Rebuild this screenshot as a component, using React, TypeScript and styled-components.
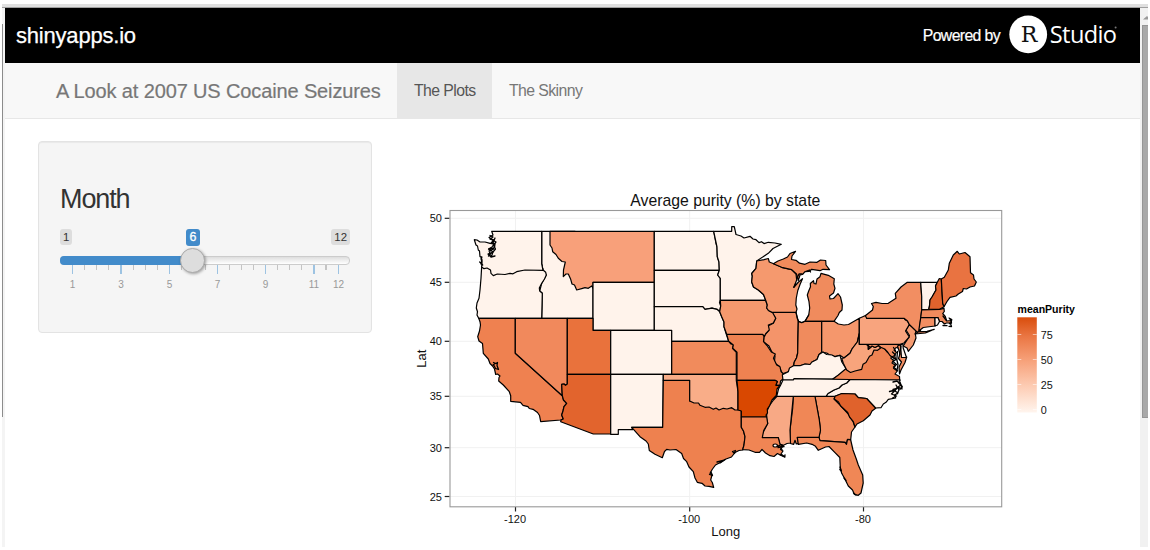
import React from "react";
import styled, { createGlobalStyle } from "styled-components";

const GlobalStyle = createGlobalStyle`
  html, body { margin: 0; padding: 0; background: #fff; }
  body { font-family: "Liberation Sans", Arial, sans-serif; color: #333; overflow: hidden; }
  * { box-sizing: border-box; }
`;

const Window = styled.div`
  width: 1150px;
  height: 550px;
  padding: 4px 2px 3px 2px;
  display: flex;
  flex-direction: column;
`;

const WindowTop = styled.div`
  height: 4px;
  flex: none;
  background: #e0e0e0;
  border-bottom: 1px solid #a0a0a0;
`;

const WindowBody = styled.div`
  flex: 1;
  display: flex;
  min-height: 0;
`;

const LeftEdge = styled.div`
  width: 3px;
  padding-top: 16px;
  background: #f4f4f4;
`;

const EdgeLine = styled.div`
  width: 1px;
  height: 393px;
  background: #8c8c8c;
`;

const Page = styled.div`
  width: 1135px;
  display: flex;
  flex-direction: column;
  background: #fff;
`;

const Scrollbar = styled.div`
  width: 8px;
  padding-left: 2px;
  background: #f1f1f1;
`;

const ScrollArrow = styled.div`
  height: 17px;
  padding: 8px 0 0 1px;
  overflow: hidden;
  svg { display: block; }
`;

const ScrollThumb = styled.div`
  height: 393px;
  background: #a8a8a8;
  border: 1px solid #959595;
  border-right: 0;
`;

const TopBar = styled.header`
  height: 55px;
  flex: none;
  padding: 0 22px 0 11px;
  display: flex;
  align-items: center;
  justify-content: space-between;
  background: #000;
  color: #fff;
`;

const Brand = styled.div`
  font-size: 22px;
  letter-spacing: -0.2px;
  line-height: 55px;
  -webkit-text-stroke: 0.25px #fff;
`;

const Powered = styled.div`
  display: flex;
  align-items: center;
  gap: 8px;
  font-size: 15.8px;
  letter-spacing: -0.62px;
  -webkit-text-stroke: 0.2px #fff;
  svg { display: block; }
`;

const NavBar = styled.nav`
  height: 56px;
  flex: none;
  display: flex;
  padding-left: 51px;
  line-height: 55px;
  background: #f8f8f8;
  border-bottom: 1px solid #e7e7e7;
  color: #777;
`;

const NavTitle = styled.div`
  width: 341px;
  padding-top: 1px;
  font-size: 20px;
  letter-spacing: -0.13px;
  white-space: nowrap;
  -webkit-text-stroke: 0.2px #777;
`;

const Tab = styled.div<{ $active?: boolean }>`
  width: 95px;
  padding-left: 17px;
  font-size: 15.8px;
  letter-spacing: -0.58px;
  white-space: nowrap;
  color: ${(p) => (p.$active ? "#555" : "#777")};
  background: ${(p) => (p.$active ? "#e7e7e7" : "transparent")};
`;

const Content = styled.main`
  display: flex;
  align-items: flex-start;
  padding: 22px 0 0 33px;
`;

const Well = styled.section`
  width: 334px;
  height: 192px;
  flex: none;
  padding: 42px 21px 0;
  background: #f5f5f5;
  border: 1px solid #e3e3e3;
  border-radius: 4px;
  box-shadow: inset 0 1px 1px rgba(0, 0, 0, 0.05);
`;

const Heading = styled.h3`
  margin: 0;
  height: 45px;
  font-size: 27px;
  line-height: 30px;
  letter-spacing: -1.1px;
  font-weight: 400;
`;

const Badges = styled.div`
  height: 27px;
  display: grid;
  grid-template-columns: 126px 1fr auto;
  align-items: start;
  justify-items: start;
`;

const Badge = styled.span<{ $current?: boolean }>`
  height: ${(p) => (p.$current ? 17 : 16)}px;
  padding: 0 ${(p) => (p.$current ? 3.5 : 3)}px;
  border-radius: 3px;
  font-size: ${(p) => (p.$current ? 12.4 : 11.4)}px;
  line-height: ${(p) => (p.$current ? 17 : 16)}px;
  color: ${(p) => (p.$current ? "#fff" : "#333")};
  background: ${(p) => (p.$current ? "#428bca" : "#ddd")};
  -webkit-text-stroke: ${(p) => (p.$current ? "0.3px #fff" : "0")};
`;

const Track = styled.div`
  position: relative;
  height: 9px;
  border: 1px solid #ccc;
  border-radius: 4px;
  background: linear-gradient(#dedede, #fff);
`;

const Fill = styled.div`
  width: 132px;
  height: 9px;
  margin: -1px 0 0 -1px;
  border-radius: 4px 0 0 4px;
  background: #428bca;
`;

const Handle = styled.div`
  position: absolute;
  left: 119px;
  top: -9px;
  width: 25px;
  height: 25px;
  border-radius: 50%;
  border: 1px solid #aaa;
  background: #ddd;
  box-shadow: 1px 1px 3px rgba(0, 0, 0, 0.35);
`;

const Ticks = styled.svg`
  display: block;
  font-size: 10px;
  fill: #999;
`;

const Plot = styled.svg`
  display: block;
  margin: 49px 0 0 33px;
  font-family: "Liberation Sans", Arial, sans-serif;
`;

const majorTicks = [
  { x: 12, w: 1, label: "1" },
  { x: 60, w: 2, label: "3" },
  { x: 109, w: 1, label: "5" },
  { x: 157, w: 1, label: "7" },
  { x: 205, w: 1, label: "9" },
  { x: 253, w: 2, label: "11" },
  { x: 278, w: 1, label: "12" },
];
const minorTicks = [24, 36, 48, 73, 85, 97, 121, 145, 169, 181, 193, 217, 229, 241, 265];

const NONE = "#fff3eb";

// Painted in order: a later state covers the hidden edges of an earlier one.
const states: { id: string; fill: string; d: string }[] = [
  { id: "ID", fill: NONE, d: "M541.7 231.3H575L593 280V318.3H541.7L542.3 293.3 539.7 291 541.7 283.3 546.3 275 543 270 541.7 264Z" },
  { id: "OR", fill: NONE, d: "M481.7 266L500 262 541 262 543 270 545.7 272.3 546.3 275 544.5 279 541.7 283.3 539.3 288 539.7 291 542.3 293.3 541.7 318.3H478.7L477 315 477.5 311.7 476.3 308 477 303 479 298.3 480 290 481 278.3Z" },
  { id: "WA", fill: NONE, d: "M491.7 231.3H541.7V264L543 270.3 525 270 516.7 271.7 513 273.8 510 273.3 505 274.5 497.3 274 493.3 275.6 491 273.3 490.5 270 487 268 484 268.7 481.7 267 482 262 481 259 482 257 480 256.7 479.5 251 478.3 250 477.5 246 476 245 474.3 239.7 477 240 480 242 485 242 490 243.3 494 244 492 247 488.5 249 490 251 489 255 491.5 256.5 493 252 495.5 249 493.5 245 496 242 492.5 240 489 237.5 493 235Z" },
  { id: "MT", fill: "#f8a07a", d: "M550 231.3H654.3V282.3H593V288.3L591.7 286 588.3 288.3 585 287.6 581.7 288.6 576.7 290 574.5 285 572 284 570.7 279.3 568.3 274 566 274 563.3 276.6 563.5 270 565.3 262 562 261.5 558.3 258.3 556 254.5 552.7 251.7 552 248 550 245Z" },
  { id: "WY", fill: NONE, d: "M593 282.3H654.3V330.3H593Z" },
  { id: "CA", fill: "#ef8150", d: "M478.7 318.3H515.3V353.3L562.3 395.7 563.5 400 566.7 403.3 564 406.7 563 411 561.7 415 563.3 419 560.7 420 540.7 421.7 539.5 415.5 537.5 412.5 533 409.3 529.3 408.5 528 406.7 523 405.3 520.5 402.3 510.7 401.3V395.7L509.3 391.7 503.3 385 498.7 381 499 377.5 500 376 497.5 374 495.7 374.5 494.5 369 492.5 366 490 363.5 488.3 359 483.3 353.3 482.5 343.5 479 341 477.7 336.7 479.5 331 480.5 325 480 321.7Z" },
  { id: "NV", fill: "#f1895c", d: "M515.3 318.3H567.3V384.3L565.5 385.3 564 384 561.7 384.3 562.3 395.7 515.3 353.3Z" },
  { id: "UT", fill: "#e9723c", d: "M567.3 318.3H593V330.3H610.7V374.3H567.3Z" },
  { id: "AZ", fill: "#e2642d", d: "M567.3 374.3H610.7V434H593.3L560.7 421.7 561 420 563.3 419 561.7 415 563 411 564 406.7 566.7 403.3 563.5 400 562.3 395.7 561.7 384.3 564 384 565.5 385.3 567.3 384Z" },
  { id: "CO", fill: NONE, d: "M610.7 330.3H671.7V374.3H610.7Z" },
  { id: "NM", fill: NONE, d: "M610.7 374.3H663.3L662.7 427.3H631.7L632.7 429.7H618.3V434.3H610.7Z" },
  { id: "ND", fill: NONE, d: "M654.3 231.3H713.7L715 238 716 243.3 717 247 717.3 256.7 719 262 719.3 270.3H654.3Z" },
  { id: "SD", fill: NONE, d: "M654.3 270.3H719.3L717.7 275 720.3 278.3V300.3L719.5 302.5 720.7 306 719.7 311.7 717 309.3 712 308.2 705 309.3 702.7 306.7H654.3Z" },
  { id: "NE", fill: NONE, d: "M654.3 306.7H702.7L705 309.3 712 308.2 717 309.3 719.7 311.7 721.7 316.7 724 322 724 326.7 726 333.3 728.7 341.3H671.7V330.3H654.3Z" },
  { id: "KS", fill: "#f18b5c", d: "M671.7 341.3H728.7L731 344 733.5 344.5 732.5 348.3 736.3 352.3V374.3H671.7Z" },
  { id: "MN", fill: NONE, d: "M713.7 231.3H731.7V226.7H734.3L736 234.5 741 236 744 238 750 236.3 753 239 756 239.7 759 242.6 761.5 241.7 764 243.6 768.3 242.3 775 243 781.3 244.3 773 248.5 768.3 253.3 756.7 261 756 268.3 751.7 273.5 752.3 276 751.7 282 753.5 287 758.3 290 763.5 294.5 765.7 300.3H720.3V278.3L717.7 275 719.3 270.3 719 262 717.3 256.7 717 247 715.5 240Z" },
  { id: "TX", fill: "#ee814f", d: "M663.3 380.3H689.7V401L738 409 741.3 411V427.3L743.5 431 745 436.7 744 445 742.7 450 739 450.5 735 452.5 731.5 457 726 459 721.7 461.7 715.5 465 712.5 469 710 473.3 712 475 710.7 480 712.3 482.5 713.7 487.3 709 486.3 705 486 702 483.3 697.3 482.3 695 478 693.3 471.7 689 467 686.7 461.7 683.5 458.5 681.7 453.5 676 449.5 670 450 666.7 449.3 664.5 451.5 662.3 457.7 655 454.3 649.3 450.5 648.3 444 646 441 640 436.7 631.7 427.3H662.7Z" },
  { id: "OK", fill: "#f9ad88", d: "M663.3 374.3H736.3V380.3L738 391.7V410L735 410 731.7 407.7 727 409 723.3 408.3 719 410 716 408 713.3 409.3 709 407 705 407.3 700 405.3 698.5 403 694 403 689.7 401V380.3H663.3Z" },
  { id: "IL", fill: "#f4946a", d: "M771.7 312.3H796L798.3 321.3 797.7 343.3V353L796.5 358 794.3 362 792.7 368.3 788.3 371.7 782.3 373.7 779 366 774.3 363 775 356 771.7 351.7 769 346 763.5 341.7 764 336 768.3 330.7 768 326 773.3 323.3 775.7 318.3Z" },
  { id: "MO", fill: "#ee8251", d: "M726.7 334.3H762.7L764 336 763.5 341.7 767 345.5 771.3 352 775.3 354 773.5 358.3 776.7 365 780 366.8 781 371.5 783.7 374.3 783 379 780.5 381 780 385.3 775.8 385.3 777.3 381.5 775 380.3H737V352.3L732.7 348.3 733.3 345 728.7 341.3Z" },
  { id: "IA", fill: "#f5996e", d: "M720.3 300.3H765.7L767.3 305 766.7 308 768.5 310.5 772.7 312.7 775.7 318.3 773.3 323 768.3 325 769.3 330 765.5 334 764.5 336.5 762.7 334.3H726.7L724 326.7 724 322 721.7 316.7 719.7 311.7 720.7 306Z" },
  { id: "WI", fill: "#f5996e", d: "M756.7 261L764 259.7 768.3 258.5 769.3 262 775 264.3 781.7 267.3 791.7 269.7 796 274 796.7 280 793.7 287.5 798.5 282 802.5 278.7 800 284.5 797.8 290.5 796.3 298 795.8 305 797 309 796 312.3H772L768.5 310.5 766.7 308 767.3 305 765.7 300.3 763.5 294.5 758.3 290 753.5 287 751.7 282 752.3 276 751.7 273.5 756 268.3Z" },
  { id: "MI upper", fill: "#f18b5c", d: "M773.3 263.7L778 261 783.3 259 787.5 257 790 253.5 795.5 251.3 792 256 791.5 259.5 796 260.3 799.5 263.2 805 264.3 810 262 817 262.3 820.5 260 825.7 260.5 826 265 829.5 269.7 823 269.3 820 270.7 811.7 269.3 809 271.5 805 271.7 802.5 274.5 800 275 798.3 280.5 796.5 274 791.7 269.7 781.7 267.3Z" },
  { id: "MI", fill: "#f08b5d", d: "M805 321.3L808.7 315 809.7 308 809 301.7 807.3 295 808.7 291 810.5 286.7 810.3 283.5 813.5 280.7 814 283.5 816 284 817 279 820 276.7 821 273.3 828.3 275.3 834.3 278.7 833.8 284 835 288.3 833.5 293 829.5 296 830 299 833.5 298.5 838 293.7 840.5 297 842.3 305 842 310 839.3 312.5 838 315.5 834 321.3H821.7Z" },
  { id: "IN", fill: "#f08b5d", d: "M798.3 321.3L801.7 322.5 805 321.3H821.7V352.3L819 354.5 817 359.5 812 362 810 364.5 805 364 800 365.7 793.7 366 794.3 362 796.5 358 797.7 353Z" },
  { id: "OH", fill: "#f5976c", d: "M821.7 321.3H834L838.3 324 844 325 848.5 324.5 859.3 318.3V333.3L857.3 342 852 349 850 353.3 844 358 840 355.3 835 356.5 829 354.5 826.7 353 821.7 352Z" },
  { id: "KY", fill: NONE, d: "M783 380L782.3 374.7 788.3 371.7 789.5 368 794 365.5 800 365.7 805 364 810 364.5 812 362 817 359.5 819 354.5 823 352 826.7 354.5 832 355 835 356.7 840 355.3 841.7 361.7 846.7 369.7 841 374 832.7 379H794L793.3 380Z" },
  { id: "VA", fill: "#ef8352", d: "M832.7 379.3L838.3 375 848 367 868 347 880.7 346 884.7 349 887 352 891.5 355 891 358.5 893.5 360 892 363 895.5 365.3 893.5 368.3 897.3 371 895 374 899.5 376.5 899.7 380Z" },
  { id: "WV", fill: "#f8a47c", d: "M859.3 333.3V344.3H868.3V349.3L870.5 347.5 872 346 875 347.5 878.5 345.5 880.7 348 877.5 350.3 874 350 872 355 869.5 356.3 866 362.5 863 364.3 861.7 369.3 855 371 850.5 372.5 846.7 370 843.3 363.3 841.7 358.3 844 358 850 353.3 852 349 857.3 342Z" },
  { id: "MD", fill: "#f28e62", d: "M868.3 344.3H900L898 348 896 347.5 894 350 896.5 352.5 894.5 355 895.7 359.3 890 355.5 887.3 351.7 884.7 349 880.7 347.3 878.5 345.5 875 347.5 872 346 868.3 349.3Z" },
  { id: "Delmarva", fill: "#f28e62", d: "M897.5 346L901.7 344.3 903 355 906.7 357 905 362.5 901 370 899.5 374 899 367 901.5 362 898.5 358.5 900 354Z" },
  { id: "DE", fill: NONE, d: "M900.5 344.7L903 344 903.2 348 906.5 357.5H901.5Z" },
  { id: "NC", fill: NONE, d: "M826 396.3L828 393.5 834 390 839 388 842 385 846.7 383 850 379.5 900.3 380 898.5 382.5 902.3 386.5 900 389.3 897 387.5 895 391 898 393 894.5 395 895.7 398 888.3 399.3 886 402.3 883.3 404 881 407.7 875.7 408 866.7 398.7 858.3 397.7 855 394 841.7 393.7 835 396.3Z" },
  { id: "TN", fill: NONE, d: "M783 380H793.3L794 378.7 850 379.5 846.7 383 842 385 839 388 834 390 828 393.5 826 396.3H776.7L778.5 389 780.7 385Z" },
  { id: "GA", fill: "#f39163", d: "M815 396.5H835L834 399 840 405 848.3 414 853.3 422 855 427 851.5 432 850.7 439.7 847.5 439.3 846.5 443.7 845 442.3 820 440.7 818.7 437.5 820.5 430 819.3 420Z" },
  { id: "SC", fill: "#e0622c", d: "M835 396.3L841.7 393.5 855 394 858.3 397.7 866.7 398.5 875.7 408.3 872 411 870 415 863.3 420.7 857 424 855 427 853.3 421.7 849.5 417 847.7 412.5 840.7 406 838.5 402 834.3 399Z" },
  { id: "AL", fill: "#f08756", d: "M793.3 396.5H815L819.3 420 820.5 430 819 437.5H797.3L798.7 443.3 796.3 444 795 440.3 793.7 444.3 790.3 443.5 790 430 792.7 408Z" },
  { id: "MS", fill: "#f8a985", d: "M776.7 396.5H793.3L790 430 790.5 443 787 443.5 783.5 445.3 779.5 444 778.3 437.7H762.3V434L767.7 423.5 766.5 418 767 411 769.5 405.5 773.5 400Z" },
  { id: "AR", fill: "#d94801", d: "M737 380.3H775L777.3 381.5 775.8 385.3H780L777 389 776.3 395.5 772 400 769.7 405.5 767.3 409 767.5 413 766 415 766.7 417H741.3V411L738 410V391.7Z" },
  { id: "LA", fill: "#f08554", d: "M741.3 417H766.7L767.7 423.5 763.7 430.5 762.3 437.7H778.3L780 444 783 446 780.5 449.5 783 451 781 454 785 457 780.5 455.3 777.5 453.5 774 456.5 770 455.7 765.5 453 762 449.5 759.5 452.3 755 452.3 749 450 742.7 449.7 744 445 745 436.7 743.5 431 741.3 427.3Z" },
  { id: "FL", fill: "#f08756", d: "M797.3 437.3H819L820 440.7 845 442.3 846.5 444.3 847.5 439.5 850.7 440 853 450 856.3 459 858.3 465 862.7 475 863.2 483 861 493 858.3 495.3 854.3 494.3 852.5 490 848.3 486 845 479.3 841.7 473.3 840.3 468 839.8 457.5 835 452.7 829 446.5 825.5 447 818.3 450.3 815.5 446.3 812 444.3 806.7 443 798.3 444.3Z" },
  { id: "NJ", fill: "#f59b71", d: "M909.3 324.7L916.7 329.3 915.3 333.5 916 338 913.3 345 908.3 351.3 907 348 903.3 346 907.3 339.5 909.5 335.5 906 330Z" },
  { id: "PA", fill: "#f8a47e", d: "M859.3 318.3L866.7 315V318.3H904L905.5 320 907.5 321 909.3 324.5 905.5 331 909.3 337 904 343 900 344.3H859.3Z" },
  { id: "NY", fill: "#f28e62", d: "M866.7 318.3L865.3 315.7 872.5 310 873.3 306.5 871.5 303.5 876 302.3 882 303.5 888.3 303.3 896 298.3 895.3 293.3 901 287 907.3 282.3H920.7L921.7 296.7V310L919.5 329 921 331.5 917 332 909.3 324.5 907.5 321 904 318.3Z" },
  { id: "Long Island", fill: "#f28e62", d: "M915 334L918.5 331.8 927 331.3 934.3 329.3 925.5 333Z" },
  { id: "VT", fill: NONE, d: "M920.7 282.3H937.3L935.5 286 936 290 932 297 930 300 929.5 306 928.7 309.7H921.7V296.7Z" },
  { id: "NH", fill: "#e1632d", d: "M937.3 282.3L939.3 278.5 941.3 279 942.7 303.3 944 306.7 939.7 309.3H928.7L929.5 306 930 300 932 297 936 290 935.5 286Z" },
  { id: "ME", fill: "#e97341", d: "M941.3 279L944.3 277.3 948.3 270 949.3 263.3 953.3 255 957.3 251.3 959.3 254 965 252.5 970 256.7 970.5 272.7 973.5 275 974 279 976.3 282 974.5 286 970 287 966.5 289 963.3 288.5 962.5 291.5 958.3 294 956 296 950 297.3 947 301.5 944 306.7 942.7 303.3Z" },
  { id: "MA", fill: "#f08b5d", d: "M921.7 310L939.7 309.3 944 308.3 944.3 311.5 942.7 313.5 945.3 316.5 946.7 321 951 320.5 949 318 951.8 319.5 951 323 946.5 323 944.5 324 942 321.5 939.3 321.3 938 317.7H920.7Z" },
  { id: "CT", fill: "#f28e62", d: "M920.7 317.7H935V326L923.3 327.5 918.7 331Z" },
  { id: "RI", fill: NONE, d: "M935 317.7H938L939.5 321.5 937.5 325 935 326Z" },
];

// Islands, bays and inlets that read as heavy scribbles along the coast.
const coastDetails = [
  "M490 235.5l3 1.5-3 2 4 1-3 3 4 1-1 4-5 1 4 3-5 2 3 3 4-1M489 251l5-2M488.5 256l4-4M495 238l-2 5 2 3",
  "M481 257l1 3-1 4M479.7 262l3 3",
  "M493.5 362.5l2.5 1 1.5-1-.5 3 1.5 4-3-1-1.5-3-1-.5 2-1.5",
  "M711 472l1.5 3.5-3-1M717 462l6-1.5 2-1-5 3.5M732.5 451.5l3-1-1 3z",
  "M777.5 446.3l3.5-1.7 3 2-4 .6 2 2.4M780 454.5l4.5 2.5.5-2M778 447.5l4-1",
  "M840 467l1.3 4-1.5-1.5M844 478l2 2.5M853.5 493l2.5 2",
  "M892.5 352l3 3-3.5 2 4 2.5-3 2 3.5 3-3 2.5 4 3.5M897.5 351.5l-.7 8 1.2 5-1 6M893.5 347.5l2 3",
  "M893 382l4-1 4 4-3 2 4 2M889.5 391.5l6-1.5-4 4 5 2-4 2M896 385l3 5-2 4M900 382l2 6",
  "M943 325.5l4 .2M949 326.3l2.5.2-.7-2M950.5 319.5l1 3.5-2 .5M943 316l3 4",
  "M797 278l2-4 3 0M805.5 271.5l4-1.5 1 2M794 287l1.5-3",
  "M867 345l3 2M901 346l-1.5 9M897 388.5l-4 1",
];

const latitudes = [
  { y: 218.3, label: "50" },
  { y: 282.3, label: "45" },
  { y: 341.3, label: "40" },
  { y: 396.3, label: "35" },
  { y: 447.7, label: "30" },
  { y: 496.5, label: "25" },
];
const longitudes = [
  { x: 515.5, label: "-120" },
  { x: 689.7, label: "-100" },
  { x: 863.5, label: "-80" },
];
const legendMarks = [
  { y: 334.8, label: "75" },
  { y: 359.8, label: "50" },
  { y: 384.8, label: "25" },
  { y: 409.8, label: "0" },
];

const RStudioLogo = () => (
  <svg width="110" height="44" viewBox="1008 13.5 110 44">
    <circle cx="1028.2" cy="33.9" r="18.9" fill="#fff" />
    <text x="1020.8" y="41.7" fontSize="23" fontFamily="'DejaVu Serif', serif" fill="#111" stroke="none" textLength="16" lengthAdjust="spacingAndGlyphs">R</text>
    <text x="1049.8" y="42.3" fontSize="23.6" fontFamily="'Open Sans', sans-serif" fill="#fff" stroke="none" textLength="66.6" lengthAdjust="spacingAndGlyphs">Studio</text>
    <circle cx="1115.6" cy="27" r="1" fill="#777" />
  </svg>
);

const PurityMap = () => (
  <Plot width="680" height="354" viewBox="405 190 680 354">
    <defs>
      <linearGradient id="purity" x1="0" y1="1" x2="0" y2="0">
        <stop offset="0" stopColor="#fff5ee" />
        <stop offset="0.27" stopColor="#fdcdb5" />
        <stop offset="0.54" stopColor="#f7a27b" />
        <stop offset="0.8" stopColor="#ea7643" />
        <stop offset="1" stopColor="#d94d0c" />
      </linearGradient>
    </defs>
    <text x="725.3" y="206" textAnchor="middle" fontSize="16.6" textLength="190" lengthAdjust="spacingAndGlyphs" fill="#111">Average purity (%) by state</text>
    {latitudes.map((l) => (
      <g key={l.label}>
        <path d={`M450 ${l.y}H1001.5`} stroke="#f1f1f1" />
        <path d={`M444.7 ${l.y}H449.5`} stroke="#222" strokeWidth="1.2" />
        <text x="442" y={l.y + 4} textAnchor="end" fontSize="11" fill="#111">{l.label}</text>
      </g>
    ))}
    {longitudes.map((l) => (
      <g key={l.label}>
        <path d={`M${l.x} 210.5V506.5`} stroke="#f1f1f1" />
        <path d={`M${l.x} 507V511.5`} stroke="#222" strokeWidth="1.2" />
        <text x={l.x - 0.5} y="523" textAnchor="middle" fontSize="11" fill="#111">{l.label}</text>
      </g>
    ))}
    <g stroke="#000" strokeWidth="1.2" strokeLinejoin="round" strokeLinecap="round">
      {states.map((s) => (
        <path key={s.id} d={s.d} fill={s.fill} />
      ))}
      <path d="M796 312.3L797.3 318.5 798.8 321.5 801.7 322.7 805 321.3 808.7 315" fill="none" />
      <ellipse cx="775.2" cy="445.5" rx="2.2" ry="1.5" fill="#fff" />
      {coastDetails.map((d) => (
        <path key={d} d={d} fill="none" strokeWidth="1.3" />
      ))}
    </g>
    <rect x="450" y="210.5" width="551.7" height="296.3" fill="none" stroke="#999" strokeWidth="1.1" />
    <text x="725.7" y="536" textAnchor="middle" fontSize="13" fill="#111">Long</text>
    <text transform="translate(426 358.7) rotate(-90)" textAnchor="middle" fontSize="13" fill="#111">Lat</text>
    <text x="1017.5" y="313" fontSize="10.6" fontWeight="700" textLength="57.5" lengthAdjust="spacingAndGlyphs" fill="#000">meanPurity</text>
    <rect x="1017.3" y="317.3" width="19.5" height="95.2" fill="url(#purity)" />
    {legendMarks.map((m) => (
      <g key={m.label}>
        <path d={`M1017.3 ${m.y - 0.3}h4M1032.8 ${m.y - 0.3}h4`} stroke="#fff" strokeOpacity="0.7" strokeWidth="0.8" />
        <text x="1040.7" y={m.y + 4.2} fontSize="10.8" fill="#111">{m.label}</text>
      </g>
    ))}
  </Plot>
);

const App = () => (
  <>
    <GlobalStyle />
    <Window>
      <WindowTop />
      <WindowBody>
        <LeftEdge>
          <EdgeLine />
        </LeftEdge>
        <Page>
          <TopBar>
            <Brand>shinyapps.io</Brand>
            <Powered>
              <span>Powered by</span>
              <RStudioLogo />
            </Powered>
          </TopBar>
          <NavBar>
            <NavTitle>A Look at 2007 US Cocaine Seizures</NavTitle>
            <Tab $active>The Plots</Tab>
            <Tab>The Skinny</Tab>
          </NavBar>
          <Content>
            <Well>
              <Heading>Month</Heading>
              <Badges>
                <Badge>1</Badge>
                <Badge $current>6</Badge>
                <Badge>12</Badge>
              </Badges>
              <Track>
                <Fill />
                <Handle />
              </Track>
              <Ticks width="290" height="30" viewBox="0 0 290 30">
                {minorTicks.map((x) => (
                  <rect key={x} x={x} y="0" width={x === 265 ? 2 : 1} height="5" fill="#c4c4c4" />
                ))}
                {majorTicks.map((t) => (
                  <g key={t.label}>
                    <rect x={t.x} y="0" width={t.w} height="9" fill="#9dc3e2" />
                    <text x={t.x + t.w / 2} y="23" textAnchor="middle">{t.label}</text>
                  </g>
                ))}
              </Ticks>
            </Well>
            <PurityMap />
          </Content>
        </Page>
        <Scrollbar>
          <ScrollArrow>
            <svg width="6" height="4" viewBox="0 0 6 4"><path d="M0 3.5L4 0 6 2V3.5Z" fill="#999" /></svg>
          </ScrollArrow>
          <ScrollThumb />
        </Scrollbar>
      </WindowBody>
    </Window>
  </>
);

export default App;
